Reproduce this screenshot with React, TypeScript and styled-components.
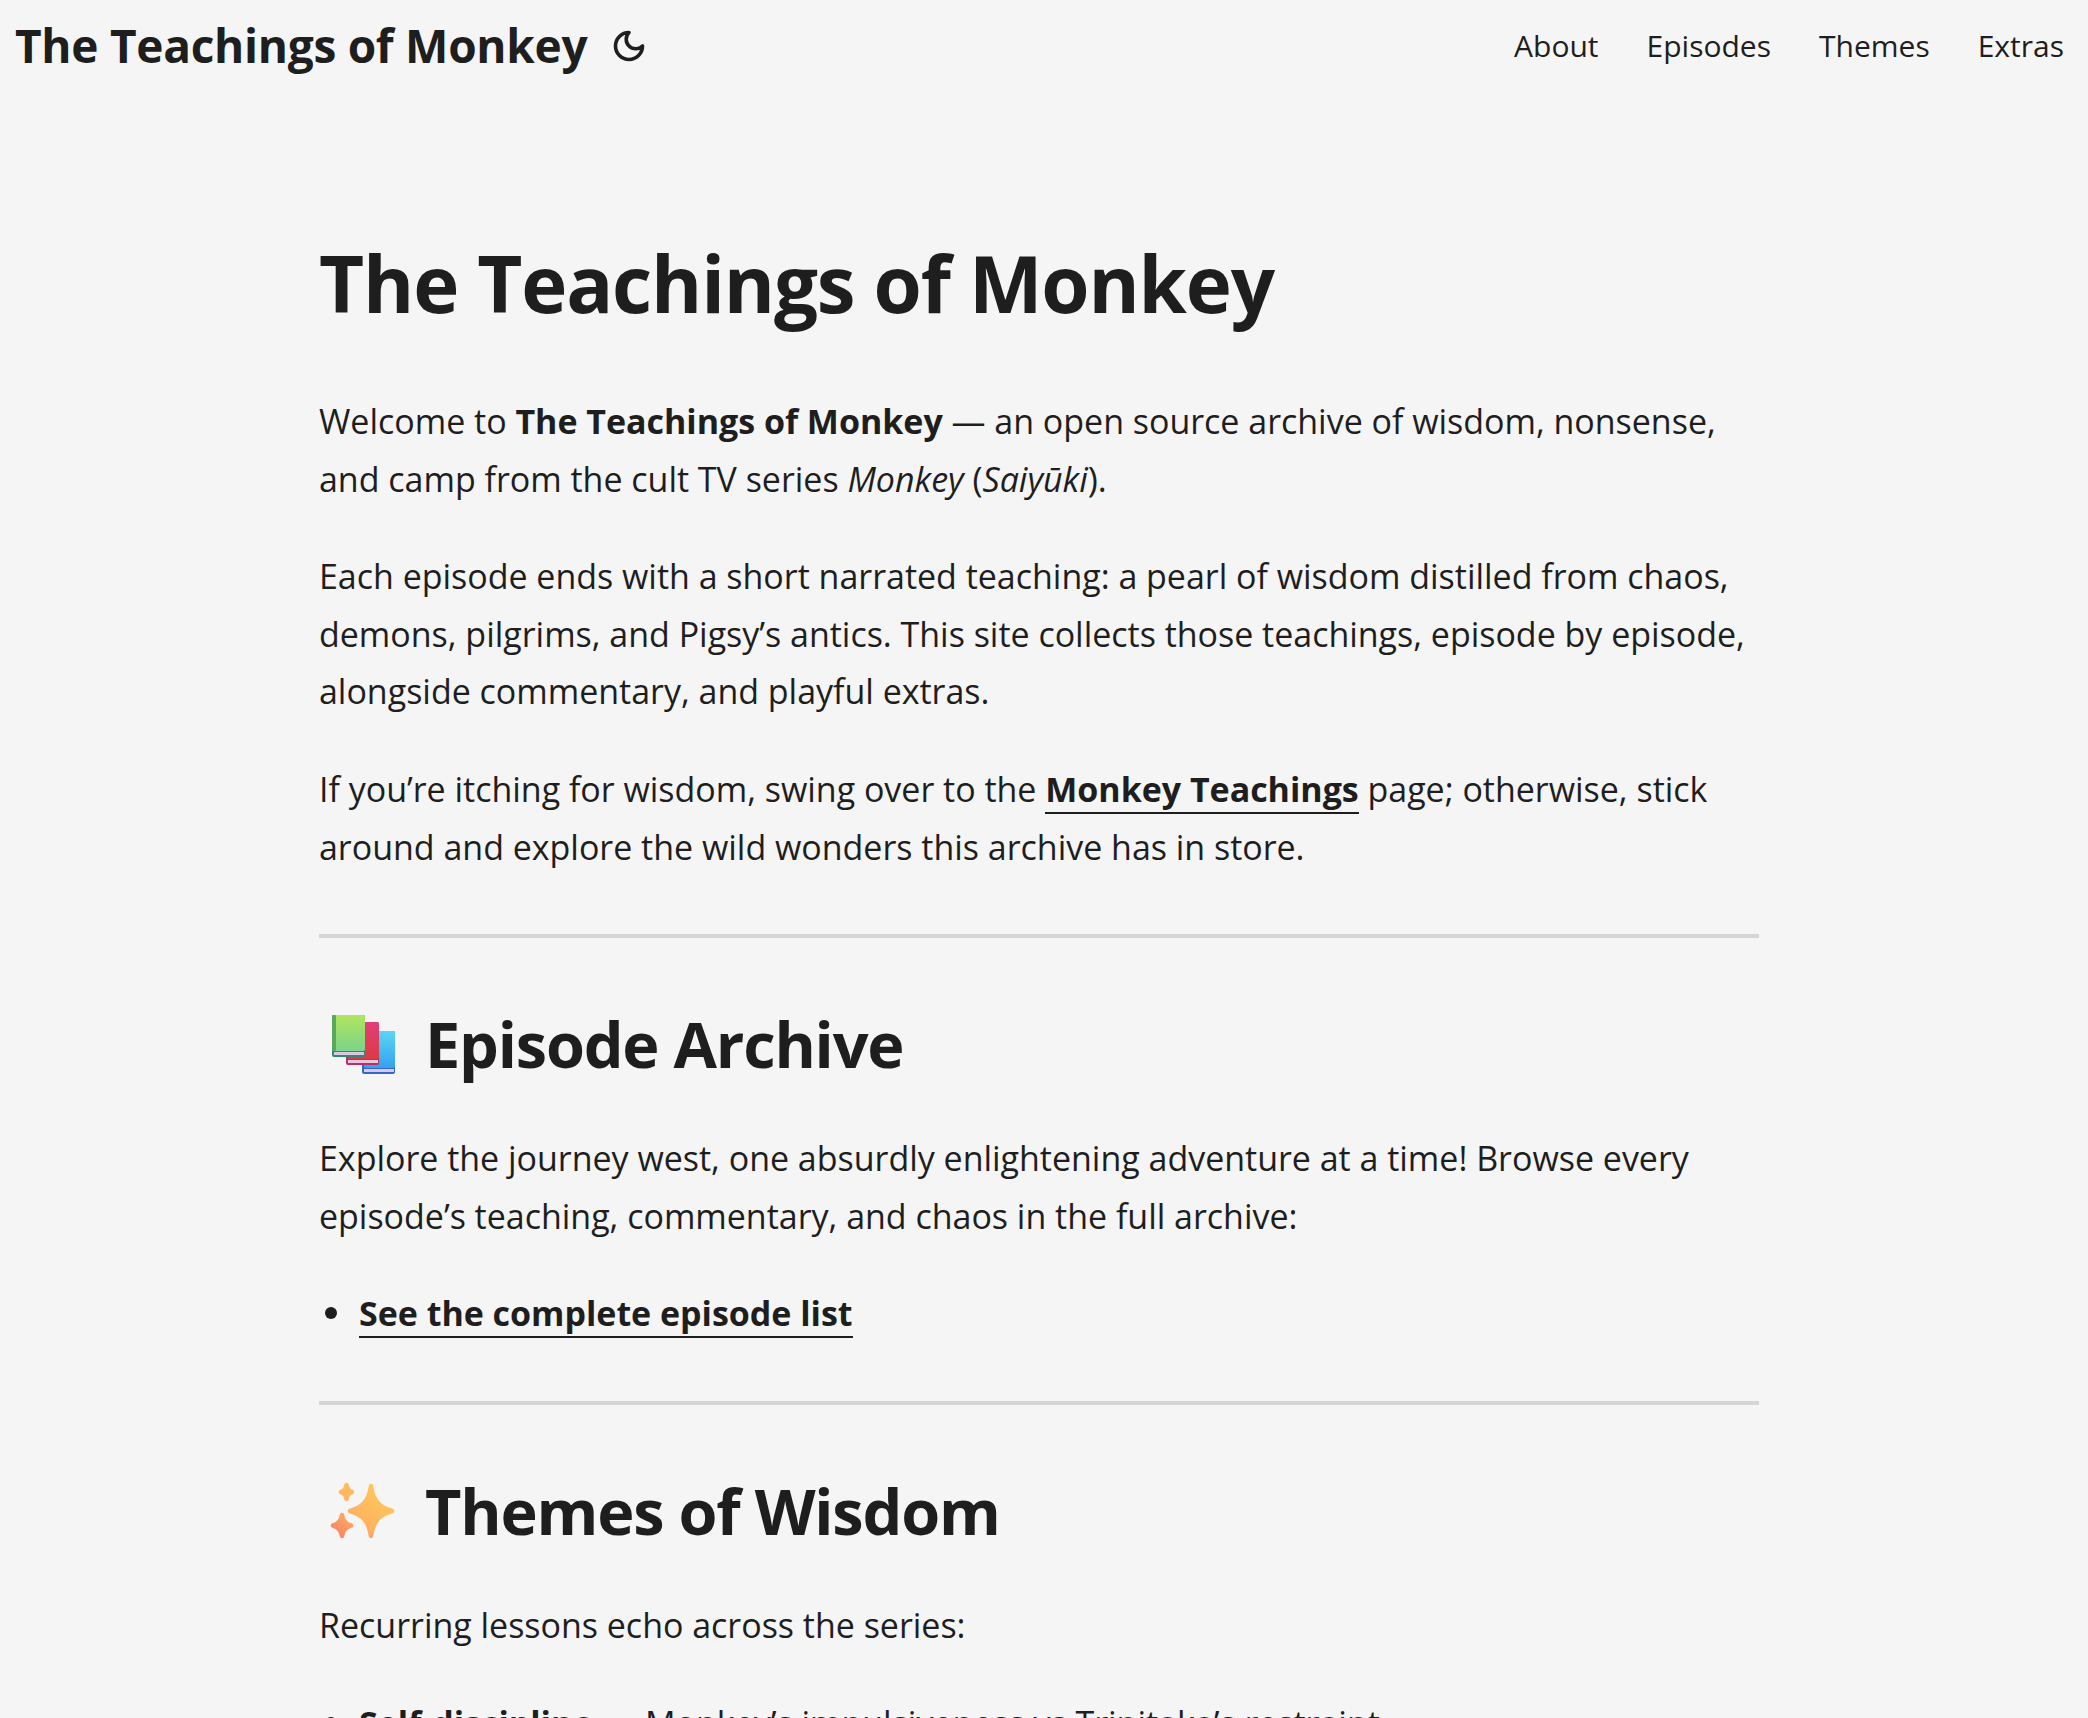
import React from 'react';
import styled, { createGlobalStyle } from 'styled-components';

const GlobalStyle = createGlobalStyle`
  html, body {
    margin: 0;
    height: 100%;
    overflow: hidden;
    background: #f5f5f5;
  }
  body {
    color: #1e1e1e;
    font-family: "Open Sans", "Noto Sans", sans-serif;
    font-size: 34px;
    line-height: 57.6px;
  }
`;

const Header = styled.header`
  display: flex;
  justify-content: space-between;
  align-items: center;
  height: 92px;
  padding: 0 24px 0 15px;
`;

const LogoGroup = styled.div`
  display: flex;
  align-items: center;
  gap: 24px;
`;

const Logo = styled.a`
  font-size: 46px;
  font-weight: 700;
  letter-spacing: -0.28px;
  color: #1e1e1e;
`;

const MoonIcon = styled.svg`
  width: 36px;
  height: 36px;
  fill: none;
  stroke: #1e1e1e;
  stroke-width: 2.4;
  stroke-linecap: round;
  stroke-linejoin: round;
`;

const Nav = styled.nav`
  display: flex;
  gap: 48px;
  font-size: 30px;
`;

const Main = styled.main`
  width: 1440px;
  margin-left: 319px;
  padding-top: 131px;
`;

const Title = styled.h1`
  margin: 0 0 50px;
  font-size: 78px;
  line-height: 120px;
  font-weight: 700;
  letter-spacing: -1.15px;
`;

const Para = styled.p`
  margin: 0 0 40px;
  letter-spacing: -0.02px;
  strong { font-weight: 700; }
`;

const TextLink = styled.a`
  font-weight: 700;
  color: #1e1e1e;
  border-bottom: 2px solid #1e1e1e;
`;

const Rule = styled.hr`
  margin: 58px 0 62px;
  border: 0;
  height: 4px;
  background: #d5d5d5;
`;

const SectionTitle = styled.h2`
  display: flex;
  align-items: center;
  gap: 21px;
  margin: 0 0 46px;
  padding: 4px 0 0 5px;
  font-size: 63px;
  line-height: 80px;
  font-weight: 700;
  letter-spacing: -1.2px;
`;

const Emoji = styled.svg`
  width: 80px;
  height: 80px;
  flex: none;
`;

const List = styled.ul`
  margin: 0;
  padding: 0 0 0 40px;
  list-style: none;
  letter-spacing: -0.02px;
`;

const Item = styled.li`
  position: relative;
  strong { font-weight: 700; }
  &::before {
    content: "";
    position: absolute;
    left: -34px;
    top: 22px;
    width: 12px;
    height: 12px;
    border-radius: 50%;
    background: #1e1e1e;
  }
`;

const BooksEmoji = () => (
  <Emoji viewBox="0 0 80 80">
    <defs>
      <linearGradient id="bookGreen" x1="0" y1="0" x2="0" y2="1">
        <stop offset="0" stopColor="#b0e45e" />
        <stop offset="1" stopColor="#7bd48a" />
      </linearGradient>
      <linearGradient id="bookRed" x1="0" y1="0" x2="0" y2="1">
        <stop offset="0" stopColor="#e23d78" />
        <stop offset="1" stopColor="#dc3b45" />
      </linearGradient>
      <linearGradient id="bookBlue" x1="0" y1="0" x2="0" y2="1">
        <stop offset="0" stopColor="#5bd6f5" />
        <stop offset="1" stopColor="#34a2ee" />
      </linearGradient>
    </defs>
    <rect x="38" y="27" width="33" height="43" rx="2" fill="#3467c9" />
    <rect x="40" y="27" width="31" height="37" rx="2" fill="url(#bookBlue)" />
    <rect x="40" y="65" width="30" height="3" fill="#dcc8ea" />
    <rect x="22" y="18" width="33" height="43" rx="2" fill="#bd2f62" />
    <rect x="24" y="18" width="31" height="37" rx="2" fill="url(#bookRed)" />
    <rect x="24" y="56" width="30" height="3" fill="#e6c6dc" />
    <rect x="8" y="11" width="33" height="42" rx="2" fill="#2f8a7c" />
    <rect x="8" y="11" width="33" height="36" rx="2" fill="url(#bookGreen)" />
    <rect x="8" y="11" width="4" height="36" rx="1" fill="#5aa85a" />
    <rect x="10" y="48" width="30" height="3" fill="#d8c8e4" />
  </Emoji>
);

// four pointed star, tips on the given radii
const starPath = (cx: number, cy: number, rx: number, ry: number) =>
  `M${cx} ${cy - ry}` +
  `C${cx + 0.1 * rx} ${cy - 0.4 * ry} ${cx + 0.4 * rx} ${cy - 0.15 * ry} ${cx + rx} ${cy}` +
  `C${cx + 0.4 * rx} ${cy + 0.15 * ry} ${cx + 0.1 * rx} ${cy + 0.4 * ry} ${cx} ${cy + ry}` +
  `C${cx - 0.1 * rx} ${cy + 0.4 * ry} ${cx - 0.4 * rx} ${cy + 0.15 * ry} ${cx - rx} ${cy}` +
  `C${cx - 0.4 * rx} ${cy - 0.15 * ry} ${cx - 0.1 * rx} ${cy - 0.4 * ry} ${cx} ${cy - ry}Z`;

const SparklesEmoji = () => (
  <Emoji viewBox="0 0 80 80">
    <defs>
      <linearGradient id="spark" gradientUnits="userSpaceOnUse" x1="60" y1="15" x2="12" y2="68">
        <stop offset="0" stopColor="#ffc95e" />
        <stop offset="0.55" stopColor="#ffb45f" />
        <stop offset="1" stopColor="#fb7e68" />
      </linearGradient>
    </defs>
    <g fill="url(#spark)" stroke="url(#spark)" strokeWidth="4.5" strokeLinejoin="round">
      <path d={starPath(47, 40, 21, 25)} />
      <path d={starPath(22.5, 21, 5.5, 7)} />
      <path d={starPath(18, 54.5, 9, 10.5)} />
    </g>
  </Emoji>
);

export default function App() {
  return (
    <>
      <GlobalStyle />
      <Header>
        <LogoGroup>
          <Logo>The Teachings of Monkey</Logo>
          <MoonIcon viewBox="0 0 24 24">
            <path d="M12 3a6 6 0 0 0 9 9 9 9 0 1 1-9-9Z" />
          </MoonIcon>
        </LogoGroup>
        <Nav>
          <span>About</span>
          <span>Episodes</span>
          <span>Themes</span>
          <span>Extras</span>
        </Nav>
      </Header>
      <Main>
        <Title>The Teachings of Monkey</Title>
        <Para>
          Welcome to <strong>The Teachings of Monkey</strong> — an open source archive of wisdom, nonsense,
          and camp from the cult TV series <em>Monkey</em> (<em>Saiyūki</em>).
        </Para>
        <Para>
          Each episode ends with a short narrated teaching: a pearl of wisdom distilled from chaos,
          demons, pilgrims, and Pigsy’s antics. This site collects those teachings, episode by episode,
          alongside commentary, and playful extras.
        </Para>
        <Para>
          If you’re itching for wisdom, swing over to the <TextLink>Monkey Teachings</TextLink> page; otherwise, stick
          around and explore the wild wonders this archive has in store.
        </Para>
        <Rule />
        <SectionTitle><BooksEmoji />Episode Archive</SectionTitle>
        <Para>
          Explore the journey west, one absurdly enlightening adventure at a time! Browse every
          episode’s teaching, commentary, and chaos in the full archive:
        </Para>
        <List>
          <Item><TextLink>See the complete episode list</TextLink></Item>
        </List>
        <Rule />
        <SectionTitle><SparklesEmoji />Themes of Wisdom</SectionTitle>
        <Para>Recurring lessons echo across the series:</Para>
        <List>
          <Item><strong>Self-discipline</strong> — Monkey’s impulsiveness vs Tripitaka’s restraint</Item>
        </List>
      </Main>
    </>
  );
}
